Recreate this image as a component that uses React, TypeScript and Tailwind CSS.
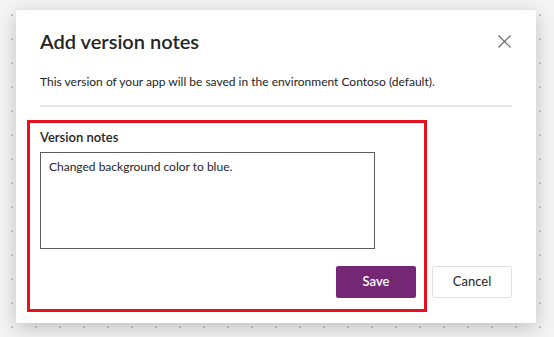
import React from "react";

export default function App() {
  return (
    <div
      className="w-[554px] h-[337px] overflow-hidden bg-[#f4f4f4] bg-[radial-gradient(circle,#c9c9c9_1px,transparent_1.3px)] bg-[length:24px_24px] bg-[position:0px_3px] pl-[16px] pt-[10px]"
      style={{ fontFamily: 'Lato, "Open Sans", sans-serif' }}
    >
      <div className="relative w-[520px] h-[313px] bg-white shadow-[0_5px_20px_rgba(0,0,0,0.22)] rounded-[2px] px-[24px] pt-[16px] flex flex-col">
        <div className="flex items-center justify-between h-[30px]">
          <h1 className="text-[20px] leading-[30px] font-semibold text-[#242424]">Add version notes</h1>
          <button className="w-[24px] h-[24px] flex items-center justify-center -mr-[4px] text-[#616161]">
            <svg width="13" height="13" viewBox="0 0 13 13" fill="none">
              <path d="M0.5 0.5L12.5 12.5M12.5 0.5L0.5 12.5" stroke="currentColor" strokeWidth="1.1" />
            </svg>
          </button>
        </div>
        <p className="mt-[18px] text-[12px] leading-[16px] text-[#242424]">
          This version of your app will be saved in the environment Contoso (default).
        </p>
        <div className="mt-[15px] h-[2px] bg-[#e6e6e6]" />
        <label className="mt-[21px] text-[13px] leading-[18px] font-semibold text-[#242424]">Version notes</label>
        <div className="mt-[6px] w-[335px] h-[97px] border border-[#5c5c5c] px-[8px] py-[6px] text-[12px] leading-[16px] text-[#242424]">
          Changed background color to blue.
        </div>
        <div className="mt-[17px] flex justify-end gap-[16px]">
          <button className="w-[80px] h-[32px] rounded-[2px] bg-[#742774] text-white text-[13px] font-semibold">Save</button>
          <button className="w-[80px] h-[32px] rounded-[2px] bg-white border border-[#e1e1e1] text-[#242424] text-[13px]">Cancel</button>
        </div>
        <div className="absolute left-[11px] top-[110px] w-[400px] h-[192px] border-[3px] border-[#e8121c] pointer-events-none" />
      </div>
    </div>
  );
}
